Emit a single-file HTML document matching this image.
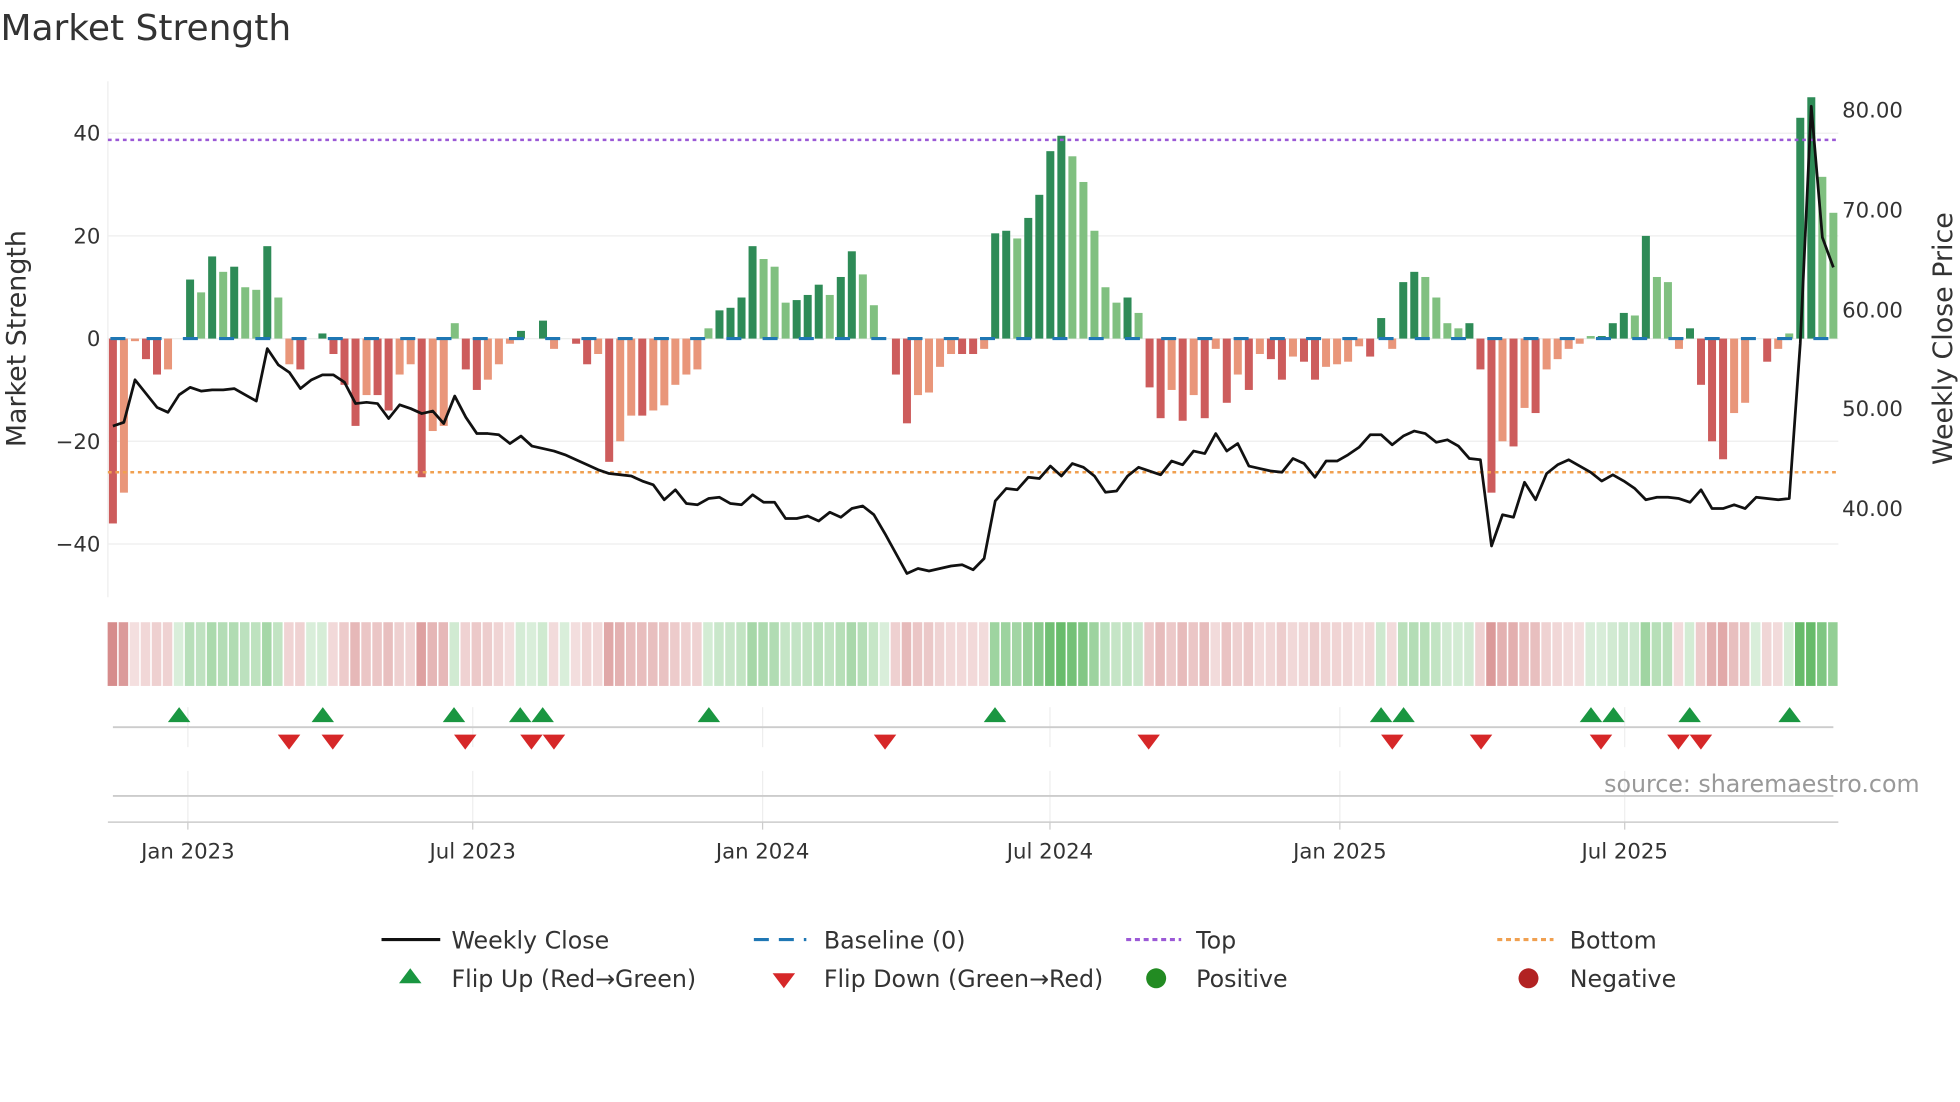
<!DOCTYPE html>
<html><head><meta charset="utf-8"><style>
html,body{margin:0;padding:0;background:#fff;width:1960px;height:1102px;overflow:hidden}
svg{display:block;font-family:"DejaVu Sans","Liberation Sans",sans-serif}
</style></head><body>
<svg id="s" width="1960" height="1102" viewBox="0 0 1568 882" xmlns="http://www.w3.org/2000/svg">
<text x="0" y="32" font-size="28.8" fill="#333">Market Strength</text>
<g id="grid"></g>
<g id="bars"></g>
<g id="heat"></g>
<g id="marks"></g>
<g id="axes" font-size="17" fill="#333"></g>
<text x="1536" y="634" font-size="19" fill="#999" text-anchor="end">source: sharemaestro.com</text>
<text transform="translate(20,271) rotate(-90)" font-size="21.5" fill="#333" text-anchor="middle">Market Strength</text>
<text transform="translate(1562,271) rotate(-90)" font-size="21.5" fill="#333" text-anchor="middle">Weekly Close Price</text>
<g font-size="19" fill="#333">
<line x1="305" y1="752" x2="352" y2="752" stroke="#111" stroke-width="2.5"/><text x="361" y="759">Weekly Close</text>
<line x1="603" y1="752" x2="645" y2="752" stroke="#1f77b4" stroke-width="2.5" stroke-dasharray="12,8"/><text x="659" y="759">Baseline (0)</text>
<line x1="901" y1="752" x2="945" y2="752" stroke="#9b59d6" stroke-width="2.5" stroke-dasharray="4,3"/><text x="957" y="759">Top</text>
<line x1="1198" y1="752" x2="1243" y2="752" stroke="#f0a050" stroke-width="2.5" stroke-dasharray="4,3"/><text x="1256" y="759">Bottom</text>
<polygon points="328,775 319,787 337,787" fill="#1a9641"/><text x="361" y="790">Flip Up (Red→Green)</text>
<polygon points="618,779 636,779 627,791" fill="#d62728"/><text x="659" y="790">Flip Down (Green→Red)</text>
<circle cx="925" cy="783" r="8" fill="#228b22"/><text x="957" y="790">Positive</text>
<circle cx="1223" cy="783" r="8" fill="#b22222"/><text x="1256" y="790">Negative</text>
</g>
</svg>
<script>
const NS="http://www.w3.org/2000/svg";
function el(p,t,a){const e=document.createElementNS(NS,t);for(const k in a)e.setAttribute(k,a[k]);document.getElementById(p).appendChild(e);return e;}
const v=[-36,-30,-0.5,-4,-7,-6,0,11.5,9,16,13,14,10,9.5,18,8,-5,-6,0,1,-3,-9,-17,-11,-11,-14,-7,-5,-27,-18,-17,3,-6,-10,-8,-5,-1,1.5,0,3.5,-2,0,-1,-5,-3,-24,-20,-15,-15,-14,-13,-9,-7,-6,2,5.5,6,8,18,15.5,14,7,7.5,8.5,10.5,8.5,12,17,12.5,6.5,0,-7,-16.5,-11,-10.5,-5.5,-3,-3,-3,-2,20.5,21,19.5,23.5,28,36.5,39.5,35.5,30.5,21,10,7,8,5,-9.5,-15.5,-10,-16,-11,-15.5,-2,-12.5,-7,-10,-3,-4,-8,-3.5,-4.5,-8,-5.5,-5,-4.5,-1.5,-3.5,4,-2,11,13,12,8,3,2,3,-6,-30,-20,-21,-13.5,-14.5,-6,-4,-2,-1,0.5,0.5,3,5,4.5,20,12,11,-2,2,-9,-20,-23.5,-14.5,-12.5,0,-4.5,-2,1,43,47,31.5,24.5];
const n=v.length,x0=90,x1=1467,dx=(x1-x0)/(n-1);
const Y=s=>271-s*4.11;
[40,20,0,-20,-40].forEach(t=>el("grid","line",{x1:86,x2:1471,y1:Y(t),y2:Y(t),stroke:"#eee","stroke-width":1}));
el("grid","line",{x1:86,x2:86,y1:65,y2:478,stroke:"#eee"});
const tx=[150,378,610,840,1072,1300],tl=["Jan 2023","Jul 2023","Jan 2024","Jul 2024","Jan 2025","Jul 2025"];
tx.forEach((x,i)=>{el("grid","line",{x1:x,x2:x,y1:566,y2:598,stroke:"#eee"});el("grid","line",{x1:x,x2:x,y1:617,y2:658,stroke:"#eee"});
el("axes","line",{x1:x,x2:x,y1:658,y2:664,stroke:"#ccc"});const t=el("axes","text",{x:x,y:687,"text-anchor":"middle"});t.textContent=tl[i];});
el("grid","line",{x1:90,x2:1467,y1:582,y2:582,stroke:"#ccc","stroke-width":1.5});
el("grid","line",{x1:90,x2:1467,y1:637,y2:637,stroke:"#ccc","stroke-width":1.5});
el("grid","line",{x1:86,x2:1471,y1:658,y2:658,stroke:"#ccc","stroke-width":1.2});
[[40,"40"],[20,"20"],[0,"0"],[-20,"\u221220"],[-40,"\u221240"]].forEach(([t,l])=>{const e=el("axes","text",{x:80,y:Y(t)+6,"text-anchor":"end"});e.textContent=l;});
[[88,"80.00"],[168,"70.00"],[248,"60.00"],[327,"50.00"],[407,"40.00"]].forEach(([y,l])=>{const e=el("axes","text",{x:1474,y:y+6});e.textContent=l;});
v.forEach((s,i)=>{const x=x0+i*dx;const prev=i?Math.abs(v[i-1]):0;const strong=Math.abs(s)>=prev;
let c=s>=0?(strong?"#2e8b57":"#80c080"):(strong?"#cd5c5c":"#e9967a");
const y=Math.min(Y(0),Y(s)),h=Math.max(Math.abs(s)*4.11,0.01);
el("bars","rect",{x:x-3.2,y:y,width:6.4,height:h,fill:c});
const a=Math.min(0.25+Math.abs(s)/40*0.75,1);
el("heat","rect",{x:x-4.2,y:498,width:7.6,height:51,fill:s>=0?"#4caf50":"#c86464","fill-opacity":s>=0?a*0.85:a*0.8});
});
el("bars","line",{x1:88,x2:1469,y1:271,y2:271,stroke:"#1f77b4","stroke-width":2.5,"stroke-dasharray":"12,17"});
el("bars","line",{x1:86,x2:1471,y1:112,y2:112,stroke:"#9b59d6","stroke-width":2,"stroke-dasharray":"3,3"});
el("bars","line",{x1:86,x2:1471,y1:378,y2:378,stroke:"#f0a050","stroke-width":2,"stroke-dasharray":"3,3"});
const py=[341,338,304,315,326,330,316,310,313,312,312,311,316,321,279,292,298,311,304,300,300,306,323,322,323,335,324,327,331,329,339,317,334,347,347,348,355,349,357,359,361,364,368,372,376,379,380,381,385,388,400,392,403,404,399,398,403,404,396,402,402,415,415,413,417,410,414,407,405,412,427,443,459,455,457,455,453,452,456,447,401,391,392,382,383,373,381,371,374,381,394,393,381,374,377,380,369,372,361,363,347,361,355,373,375,377,378,367,371,382,369,369,364,358,348,348,356,349,345,347,354,352,357,367,368,437,412,414,386,400,379,372,368,373,378,385,380,385,391,400,398,398,399,402,392,407,407,404,407,398,399,400,399,275,85,190,214];
el("bars","polyline",{points:py.map((y,i)=>(x0+i*dx).toFixed(1)+","+y).join(" "),fill:"none",stroke:"#111","stroke-width":2.2,"stroke-linejoin":"round"});
[143,258,363,416,434,567,796,1105,1123,1273,1291,1352,1432].forEach(x=>el("marks","polygon",{points:`${x},566 ${x-9},578 ${x+9},578`,fill:"#1a9641"}));
[231,266,372,425,443,708,919,1114,1185,1281,1343,1361].forEach(x=>el("marks","polygon",{points:`${x-9},588 ${x+9},588 ${x},600`,fill:"#d62728"}));
</script>
</body></html>
